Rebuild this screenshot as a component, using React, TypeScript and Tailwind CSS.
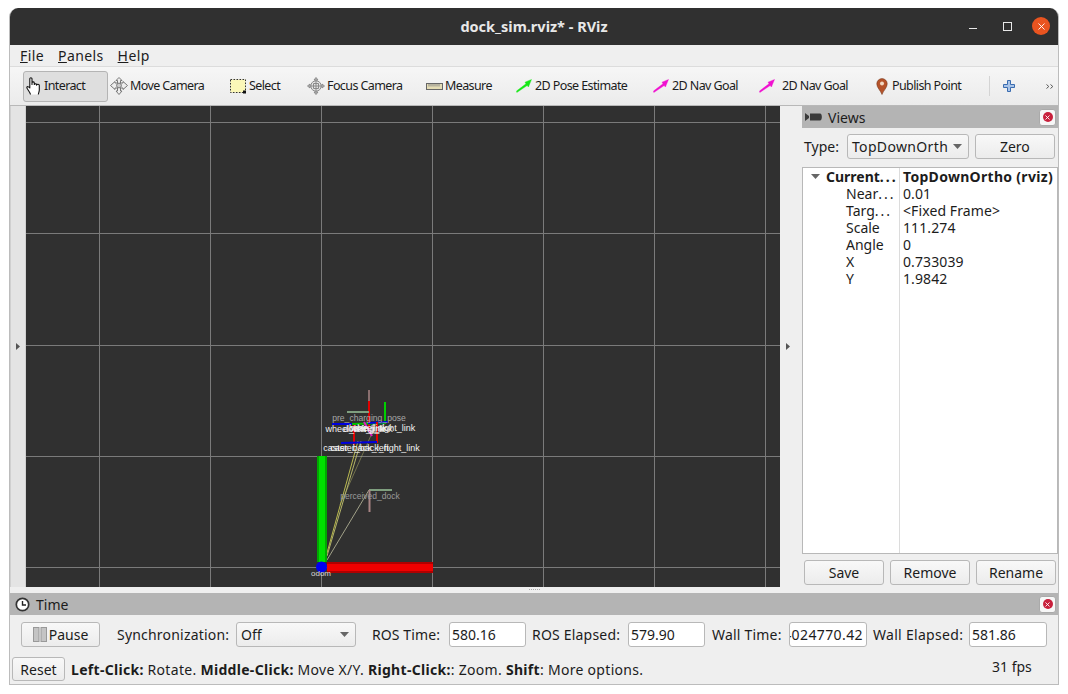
import React from "react";
import { X } from "lucide-react";

function Hand() {
  return (
    <svg width="18" height="20" viewBox="0 0 18 20" className="shrink-0">
      <path d="M4.5 18.5 C4 16 1 13 .8 11.5 C1 10 2.8 10.6 3.8 12 L3.8 3 C3.8 1.3 6 1.3 6 3 L6 8.5 L6 6.6 C6.4 5.6 8 5.6 8.3 6.8 L8.3 8.5 C8.6 7.4 10.4 7.4 10.6 8.6 L10.6 9.2 C11 8 13.2 8 13.3 9.4 L13.3 14 C13.3 15.6 12.5 17 12.3 18.5" fill="#fff" stroke="#111" strokeWidth="1.1" strokeLinejoin="round" />
    </svg>
  );
}

function MoveIcon() {
  return (
    <svg width="18" height="18" viewBox="0 0 18 18" className="shrink-0" fill="#eee" stroke="#777" strokeWidth="1">
      <path d="M9 .5 L12 3.5 L10.5 3.5 L10.5 6 L13 6 L13 4.5 L17.5 8.5 L13 12.5 L13 11 L10.5 11 L10.5 14 L12 14 L9 17.5 L6 14 L7.5 14 L7.5 11 L5 11 L5 12.5 L.5 8.5 L5 4.5 L5 6 L7.5 6 L7.5 3.5 L6 3.5 Z" />
      <circle cx="9" cy="8.5" r="2.4" fill="#ccc" />
    </svg>
  );
}

function SelectIcon() {
  return (
    <svg width="17" height="15" viewBox="0 0 17 15" className="shrink-0">
      <rect x=".5" y=".5" width="15" height="13" fill="#fbf7b8" stroke="#333" strokeWidth="1" strokeDasharray="1.6 1.4" />
      <rect x="13" y="11.5" width="3" height="3" fill="#111" />
    </svg>
  );
}

function FocusIcon() {
  return (
    <svg width="18" height="18" viewBox="0 0 18 18" className="shrink-0" fill="none" stroke="#8a8a8a" strokeWidth="1">
      <path d="M9 .5 L11 3 L7 3 Z M9 17.5 L11 15 L7 15 Z M.5 9 L3 7 L3 11 Z M17.5 9 L15 7 L15 11 Z" fill="#bbb" />
      <circle cx="9" cy="9" r="5.2" fill="#e4e4e4" />
      <path d="M9 3 V15 M3 9 H15 M6.5 6.5 H11.5 V11.5 H6.5 Z" />
    </svg>
  );
}

function Ruler() {
  return (
    <svg width="17" height="7" viewBox="0 0 17 7" className="shrink-0">
      <rect x=".5" y=".5" width="16" height="6" fill="#e4dcb4" stroke="#666" />
      <path d="M3 1V3.5M5 1V3.5M7 1V3.5M9 1V3.5M11 1V3.5M13 1V3.5" stroke="#888" strokeWidth="1" />
    </svg>
  );
}

function Arrow({ color }: { color: string }) {
  return (
    <svg width="16" height="14" viewBox="0 0 16 14" className="shrink-0">
      <path d="M15.5 .5 L9 3.2 L10 4.8 L.5 12 L.8 13.5 L11.2 6.5 L12.4 8 Z" fill={color} stroke={color} strokeWidth=".4" />
    </svg>
  );
}

function Pin() {
  return (
    <svg width="12" height="17" viewBox="0 0 12 17" className="shrink-0">
      <path d="M6 16.5 C4.5 12.5 .8 9.5 .8 5.8 A5.2 5.2 0 0 1 11.2 5.8 C11.2 9.5 7.5 12.5 6 16.5 Z" fill="#b5532a" stroke="#7a3a1e" strokeWidth=".6" />
      <circle cx="6" cy="5.6" r="2" fill="#f1d9c4" />
    </svg>
  );
}

function CloseBadge() {
  return (
    <div className="w-[17px] h-[17px] bg-[#f7f7f7] border border-[#aaaaaa] rounded-[3px] flex items-center justify-center">
      <div className="w-[10px] h-[10px] rounded-full bg-[#c8203c] flex items-center justify-center">
        <X size={7} color="#fff" strokeWidth={3} />
      </div>
    </div>
  );
}

function Tool({ w, icon, label, active, gap }: { w: string; icon: React.ReactNode; label: string; active?: boolean; gap?: string }) {
  return (
    <div className={`${w} h-[31px] flex items-center shrink-0 ${gap ?? "gap-[2px]"} ${active ? "bg-[#dedede] border border-[#b4b4b4] rounded-[3px] pl-[2px]" : ""}`}>
      {icon}
      <span className="text-[12.5px] tracking-[-0.6px] text-[#1c1c1c] whitespace-nowrap">{label}</span>
    </div>
  );
}

function Btn({ className, children }: { className: string; children: React.ReactNode }) {
  return (
    <div className={`${className} flex items-center justify-center rounded-[3px] border border-[#b8b8b8] bg-gradient-to-b from-[#f8f8f8] to-[#ececec] text-[14px] text-[#1c1c1c] shrink-0`}>
      {children}
    </div>
  );
}

function Field({ className, children }: { className: string; children: React.ReactNode }) {
  return (
    <div className={`${className} h-[25px] bg-white border border-[#b8b8b8] rounded-[3px] flex items-center text-[14px] text-[#1c1c1c] shrink-0 overflow-hidden`}>
      {children}
    </div>
  );
}

const Caret = ({ className }: { className?: string }) => (
  <svg width="9" height="5" viewBox="0 0 9 5" className={className}><path d="M0 0 H9 L4.5 5 Z" fill="#666" /></svg>
);

const tt = "fill-[#f2f2f2] text-[9px]";

function Scene() {
  const vs = [99, 210, 321, 432, 543, 654, 765];
  const hs = [122, 233, 345, 456, 567];
  return (
    <svg viewBox="26 106 754 481" width="754" height="481" className="block" fontFamily="'Liberation Sans', sans-serif">
      <rect x="26" y="106" width="754" height="481" fill="#303030" />
      {vs.map((x) => <line key={x} x1={x + 0.5} x2={x + 0.5} y1="106" y2="587" stroke="#7a7a7a" />)}
      {hs.map((y) => <line key={y} y1={y + 0.5} y2={y + 0.5} x1="26" x2="780" stroke="#7a7a7a" />)}

      <line x1="327" y1="556" x2="361" y2="441" stroke="#b5b56a" />
      <line x1="327" y1="553" x2="358" y2="441" stroke="#b9b94f" />
      <line x1="327" y1="560" x2="369" y2="490" stroke="#a0a088" />
      <line x1="340" y1="505" x2="376" y2="424" stroke="#b5b56a" opacity=".5" />

      <rect x="317" y="456" width="10" height="106" fill="#00e000" />
      <rect x="317" y="456" width="2" height="106" fill="#00a800" />
      <rect x="325" y="456" width="2" height="106" fill="#00a800" />
      <rect x="327" y="562" width="106" height="11" fill="#f00000" />
      <rect x="327" y="562" width="106" height="2" fill="#b00000" />
      <rect x="327" y="571" width="106" height="2" fill="#b00000" />

      <line x1="369" y1="390" x2="369" y2="401" stroke="#a88484" strokeWidth="1.5" />
      <line x1="369" y1="401" x2="369" y2="430" stroke="#e00000" strokeWidth="2" />
      <line x1="347" y1="412" x2="369" y2="412" stroke="#7f9f7f" strokeWidth="2" />
      <line x1="369" y1="490" x2="392" y2="490" stroke="#7f9f7f" strokeWidth="2" />
      <line x1="369.5" y1="490" x2="369.5" y2="512" stroke="#a88484" strokeWidth="2" />
      <line x1="385" y1="402" x2="385" y2="424" stroke="#00d000" strokeWidth="2" />
      <line x1="332" y1="424" x2="352" y2="424" stroke="#0000e0" strokeWidth="2" />
      <line x1="352" y1="424" x2="385" y2="423" stroke="#00c000" strokeWidth="2" />
      <line x1="368" y1="423" x2="388" y2="422" stroke="#0000e0" strokeWidth="2" />
      <line x1="354" y1="425" x2="354" y2="445" stroke="#e00000" strokeWidth="2" />
      <line x1="377" y1="422" x2="377" y2="443" stroke="#e00000" strokeWidth="2" />
      <line x1="341" y1="443" x2="377" y2="442" stroke="#0000e0" strokeWidth="2" />
      <line x1="364" y1="422" x2="372" y2="436" stroke="#e020c0" strokeWidth="2" />

      <circle cx="321.5" cy="567" r="5.5" fill="#0000f0" />

      <text x="321" y="576" textAnchor="middle" className="fill-[#d8d8d8] text-[8px]">odom</text>
      <text x="370" y="499" textAnchor="middle" className="fill-[#9a9a9a] text-[8.5px]">perceived_dock</text>
      <text x="369" y="421" textAnchor="middle" className="fill-[#a8a8a8] text-[8.6px]">pre_charging_pose</text>
      <text x="355" y="432" textAnchor="middle" className={tt}>wheel_left_link</text>
      <text x="383" y="431" textAnchor="middle" className={tt}>wheel_right_link</text>
      <text x="368" y="432" textAnchor="middle" className={tt}>docking_link</text>
      <text x="368" y="431" textAnchor="middle" className={tt}>base_link</text>
      <text x="356" y="451" textAnchor="middle" className={tt}>caster_back_left</text>
      <text x="375" y="451" textAnchor="middle" className={tt}>caster_back_right_link</text>
    </svg>
  );
}

const rows: [string, string, boolean][] = [
  ["Near", "0.01", true],
  ["Targ", "<Fixed Frame>", true],
  ["Scale", "111.274", false],
  ["Angle", "0", false],
  ["X", "0.733039", false],
  ["Y", "1.9842", false],
];

export default function App() {
  return (
    <div className="w-[1068px] h-[694px] bg-white overflow-hidden pt-2 pl-[9px] font-['Noto_Sans',sans-serif]">
      <div className="w-[1050px] h-[677px] flex flex-col bg-[#efefef] rounded-t-[9px] border-x border-b border-[#bcbcbc] overflow-hidden">
        {/* title bar */}
        <div className="h-[37px] shrink-0 bg-[#303030] relative flex items-center justify-center">
          <span className="text-[14.5px] font-bold text-[#e8e8e8]">dock_sim.rviz* - RViz</span>
          <div className="absolute right-[8px] top-[9px] flex items-center">
            <div className="w-[8px] h-px bg-[#e8e8e8] mt-[4px] mr-[26px]" />
            <div className="w-[9px] h-[9px] border border-[#e8e8e8] mr-[20px]" />
            <div className="w-[18px] h-[18px] rounded-full bg-[#e95420] flex items-center justify-center">
              <X size={11} color="#fff" strokeWidth={2} />
            </div>
          </div>
        </div>
        {/* menu bar */}
        <div className="h-[22px] shrink-0 flex items-center pl-[10px] gap-[14px] text-[14px] tracking-[0.4px] text-[#1c1c1c] border-b border-[#dcdcdc]">
          <span><u>F</u>ile</span>
          <span><u>P</u>anels</span>
          <span><u>H</u>elp</span>
        </div>
        {/* toolbar */}
        <div className="h-[39px] shrink-0 flex items-center pl-[13px] bg-gradient-to-b from-[#f6f6f6] to-[#ebebeb] border-b border-[#b8b8b8]">
          <Tool w="w-[85px]" icon={<Hand />} label="Interact" active gap="gap-0" />
          <div className="w-[2px] shrink-0" />
          <Tool w="w-[120px]" icon={<MoveIcon />} label="Move Camera" />
          <Tool w="w-[77px]" icon={<SelectIcon />} label="Select" />
          <Tool w="w-[119px]" icon={<FocusIcon />} label="Focus Camera" />
          <Tool w="w-[90px]" icon={<Ruler />} label="Measure" />
          <Tool w="w-[137px]" icon={<Arrow color="#18e818" />} label="2D Pose Estimate" gap="gap-[3px]" />
          <Tool w="w-[106px]" icon={<Arrow color="#f010d0" />} label="2D Nav Goal" gap="gap-[3px]" />
          <Tool w="w-[117px]" icon={<Arrow color="#f010d0" />} label="2D Nav Goal" gap="gap-[7px]" />
          <Tool w="w-[113px]" icon={<Pin />} label="Publish Point" gap="gap-[4px]" />
          <div className="w-px h-[20px] bg-[#d4d4d4] shrink-0" />
          <svg width="12" height="12" viewBox="0 0 12 12" className="ml-[13px] shrink-0">
            <path d="M4.5 .5 H7.5 V4.5 H11.5 V7.5 H7.5 V11.5 H4.5 V7.5 H.5 V4.5 H4.5 Z" fill="#a9c4e8" stroke="#3a6cb0" />
          </svg>
          <svg width="8" height="5" viewBox="0 0 8 5" className="ml-[31px] shrink-0" fill="none" stroke="#555">
            <path d="M.5 .5 L2.8 2.5 L.5 4.5 M4.5 .5 L6.8 2.5 L4.5 4.5" />
          </svg>
        </div>
        {/* main */}
        <div className="h-[481px] shrink-0 flex">
          <div className="w-[16px] shrink-0 bg-[#e4e4e4] border-x border-[#d0d0d0] flex items-center justify-center">
            <svg width="4" height="7" viewBox="0 0 4 7"><path d="M0 0 L4 3.5 L0 7 Z" fill="#555" /></svg>
          </div>
          <div className="w-[754px] shrink-0 h-[481px]"><Scene /></div>
          <div className="w-[22px] shrink-0 flex items-center justify-center pr-[7px]">
            <svg width="4" height="7" viewBox="0 0 4 7"><path d="M0 0 L4 3.5 L0 7 Z" fill="#555" /></svg>
          </div>
          <div className="flex-1 min-w-0 flex flex-col">
            <div className="h-[22px] shrink-0 bg-[#b4b4b4] flex items-center pl-[3px] pr-[2px]">
              <svg width="18" height="10" viewBox="0 0 18 10" className="shrink-0">
                <path d="M0 1 L4 4 V6 L0 9 Z M5 1.5 H15 C17.5 1.5 17.5 8.5 15 8.5 H5 Z" fill="#3a3a3a" />
              </svg>
              <span className="ml-[5px] text-[14px] text-[#1c1c1c]">Views</span>
              <div className="ml-auto"><CloseBadge /></div>
            </div>
            <div className="h-[39px] shrink-0 flex items-center pl-[2px] pb-[2px] text-[14px] text-[#1c1c1c]">
              <span>Type:</span>
              <div className="ml-[8px] w-[122px] h-[25px] rounded-[3px] border border-[#b8b8b8] bg-gradient-to-b from-[#f8f8f8] to-[#ececec] flex items-center pl-[4px] pr-[6px] shrink-0">
                <span className="tracking-[0.35px]">TopDownOrth</span>
                <Caret className="ml-auto shrink-0" />
              </div>
              <Btn className="ml-[6px] w-[80px] h-[25px]">Zero</Btn>
            </div>
            <div className="h-[387px] shrink-0 bg-white border border-[#b8b8b8] flex text-[14px] text-[#1c1c1c]">
              <div className="w-[97px] shrink-0 border-r border-[#dcdcdc]">
                <div className="h-[17px] flex items-center pl-[8px] font-bold leading-none">
                  <Caret className="shrink-0" />
                  <span className="ml-[6px] whitespace-nowrap">Current<span className="tracking-[2px]">...</span></span>
                </div>
                {rows.map(([k, , dots]) => (
                  <div key={k} className="h-[17px] flex items-center pl-[43px] leading-none whitespace-nowrap">
                    {k}{dots ? <span className="tracking-[2px]">...</span> : null}
                  </div>
                ))}
              </div>
              <div className="flex-1 min-w-0 pl-[3px]">
                <div className="h-[17px] flex items-center font-bold leading-none whitespace-nowrap tracking-[0.3px]">TopDownOrtho (rviz)</div>
                {rows.map(([k, v]) => (
                  <div key={k} className="h-[17px] flex items-center leading-none tracking-[0.1px]">{v}</div>
                ))}
              </div>
            </div>
            <div className="h-[33px] shrink-0 flex items-start pt-[6px] pl-[2px] gap-[6px]">
              <Btn className="w-[80px] h-[25px]">Save</Btn>
              <Btn className="w-[80px] h-[25px]">Remove</Btn>
              <Btn className="w-[80px] h-[25px]">Rename</Btn>
            </div>
          </div>
        </div>
        {/* splitter */}
        <div className="h-[6px] shrink-0 flex items-start justify-center pt-[2px] pl-[1px] gap-[1px]">
          {[0, 1, 2, 3, 4, 5].map((i) => <div key={i} className="w-px h-px bg-[#aaaaaa]" />)}
        </div>
        {/* time panel title */}
        <div className="h-[22px] shrink-0 bg-[#b4b4b4] flex items-center pl-[5px] pr-[2px]">
          <svg width="15" height="15" viewBox="0 0 15 15" className="shrink-0">
            <circle cx="7.5" cy="7.5" r="6.2" fill="#fff" stroke="#333" strokeWidth="1.7" />
            <path d="M7.5 4 V8 H11" fill="none" stroke="#222" strokeWidth="1.4" />
          </svg>
          <span className="ml-[6px] text-[14px] text-[#1c1c1c]">Time</span>
          <div className="ml-auto"><CloseBadge /></div>
        </div>
        {/* time controls */}
        <div className="h-[37px] shrink-0 flex items-center pt-[2px] pl-[11px] text-[14px] text-[#1c1c1c] whitespace-nowrap">
          <Btn className="w-[79px] h-[25px] gap-[2px]">
            <svg width="14" height="15" viewBox="0 0 14 15"><rect x=".5" y=".5" width="5.5" height="14" fill="#c4c4c4" stroke="#999" /><rect x="8" y=".5" width="5.5" height="14" fill="#c4c4c4" stroke="#999" /></svg>
            <span>Pause</span>
          </Btn>
          <span className="ml-[17px] w-[119px] shrink-0 tracking-[0.2px]">Synchronization:</span>
          <div className="w-[120px] h-[25px] shrink-0 rounded-[3px] border border-[#b8b8b8] bg-gradient-to-b from-[#f8f8f8] to-[#ececec] flex items-center pl-[4px] pr-[6px]">
            <span>Off</span>
            <Caret className="ml-auto" />
          </div>
          <span className="ml-[16px] w-[77px] shrink-0 tracking-[0.1px]">ROS Time:</span>
          <Field className="w-[77px] pl-[2px]">580.16</Field>
          <span className="ml-[6px] w-[96px] shrink-0 tracking-[0.2px]">ROS Elapsed:</span>
          <Field className="w-[77px] pl-[2px]">579.90</Field>
          <span className="ml-[7px] w-[77px] shrink-0 tracking-[0.2px]">Wall Time:</span>
          <Field className="w-[78px] justify-end pr-[3px]"><span className="shrink-0 tracking-[0.4px]">1624024770.42</span></Field>
          <span className="ml-[6px] w-[96px] shrink-0 tracking-[0.3px]">Wall Elapsed:</span>
          <Field className="w-[78px] pl-[2px]">581.86</Field>
        </div>
        {/* status */}
        <div className="flex-1 min-h-0 flex items-center pl-[2px] pt-[2px] text-[14px] text-[#1c1c1c] whitespace-nowrap relative">
          <Btn className="w-[53px] h-[24px]">Reset</Btn>
          <span className="ml-[6px] tracking-[0.3px]"><b>Left-Click:</b> Rotate. <b>Middle-Click:</b> Move X/Y. <b>Right-Click:</b>: Zoom. <b>Shift</b>: More options.</span>
          <span className="absolute left-[982px] top-[4px]">31 fps</span>
        </div>
      </div>
    </div>
  );
}
